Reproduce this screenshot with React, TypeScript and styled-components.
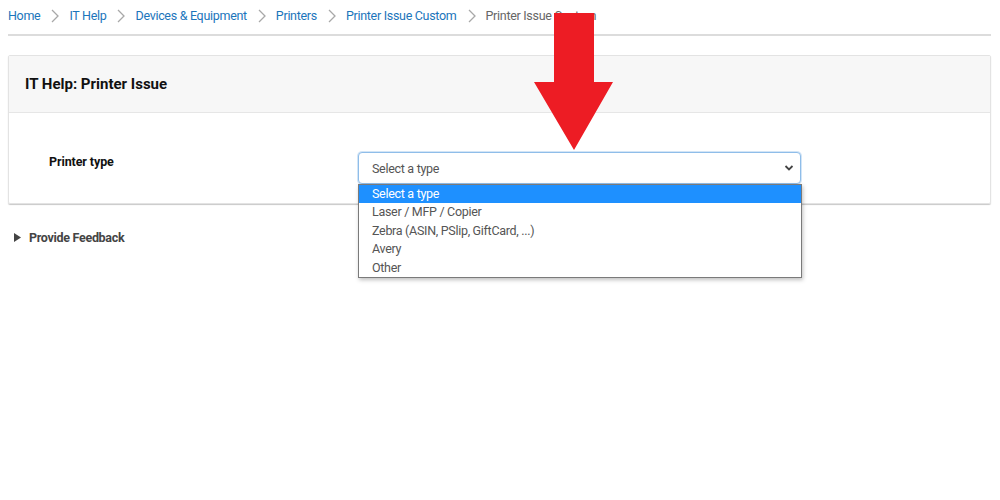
import React from 'react';
import styled, { createGlobalStyle } from 'styled-components';

const crumbs = [
  'Home',
  'IT Help',
  'Devices & Equipment',
  'Printers',
  'Printer Issue Custom',
];

const options = [
  'Select a type',
  'Laser / MFP / Copier',
  'Zebra (ASIN, PSlip, GiftCard, ...)',
  'Avery',
  'Other',
];

const GlobalStyle = createGlobalStyle`
  html, body {
    margin: 0;
    padding: 0;
    background: #ffffff;
  }
  body {
    font-family: Roboto, "Noto Sans", Arial, sans-serif;
    font-size: 12.5px;
    letter-spacing: -0.3px;
    color: #333;
  }
`;

const Page = styled.div`
  position: relative;
  width: 1000px;
  height: 500px;
  padding: 0 9px 0 8px;
  box-sizing: border-box;
  overflow: hidden;
`;

const Breadcrumb = styled.nav`
  display: flex;
  align-items: center;
  height: 36px;
  border-bottom: 2px solid #dcdcdc;
  box-sizing: border-box;
  padding-bottom: 3px;
`;

const Crumb = styled.a<{ $current?: boolean }>`
  color: ${({ $current }) => ($current ? '#666' : '#1b75bb')};
  text-decoration: none;
  font-size: 12.5px;
  white-space: nowrap;
`;

const Sep = styled.span`
  display: flex;
  align-items: center;
  margin: 0 10px 0 11px;
`;

const Card = styled.section`
  margin-top: 19px;
  border: 1px solid #e3e3e3;
  border-radius: 2px;
  box-shadow: 0 1px 1px rgba(0, 0, 0, 0.22);
`;

const CardHeader = styled.header`
  display: flex;
  align-items: center;
  height: 56px;
  padding: 0 16px;
  background: #f7f7f7;
  border-bottom: 1px solid #e6e6e6;
`;

const Title = styled.h2`
  margin: 0;
  font-size: 15px;
  font-weight: 700;
  letter-spacing: 0;
  color: #111;
`;

const CardBody = styled.div`
  display: grid;
  grid-template-columns: 309px 443px;
  padding: 39px 0 19px 40px;
`;

const Label = styled.label`
  font-size: 12.5px;
  font-weight: 700;
  letter-spacing: -0.1px;
  color: #111;
  padding-top: 2px;
`;

const SelectWrap = styled.div`
  position: relative;
`;

const SelectBox = styled.div`
  display: flex;
  align-items: center;
  justify-content: space-between;
  height: 32px;
  box-sizing: border-box;
  padding: 0 6px 0 13px;
  border: 1px solid #8fbde9;
  border-radius: 4px;
  box-shadow: 0 0 0 1px rgba(130, 180, 230, 0.35);
  color: #555;
  background: #fff;
`;

const Listbox = styled.ul`
  position: absolute;
  top: 32px;
  left: 0;
  width: 444px;
  margin: 0;
  padding: 0;
  list-style: none;
  background: #fff;
  border: 1px solid #7a7a7a;
  box-sizing: border-box;
  box-shadow: 1px 2px 4px rgba(0, 0, 0, 0.25);
  z-index: 2;
`;

const Option = styled.li<{ $active?: boolean }>`
  height: 18.4px;
  line-height: 18.4px;
  padding-left: 13px;
  color: ${({ $active }) => ($active ? '#fff' : '#555')};
  background: ${({ $active }) => ($active ? '#1e90ff' : 'transparent')};
`;

const Feedback = styled.div`
  display: flex;
  align-items: center;
  gap: 8px;
  margin-top: 26px;
  padding-left: 6px;
  font-weight: 700;
  color: #444;
`;

const Arrow = styled.svg`
  position: absolute;
  left: 534px;
  top: 13px;
  z-index: 3;
`;

const Chevron = () => (
  <svg width="8" height="14" viewBox="0 0 8 14">
    <polyline points="1,1 7,7 1,13" fill="none" stroke="#a8a8a8" strokeWidth="1.3" />
  </svg>
);

export default function App() {
  return (
    <>
      <GlobalStyle />
      <Page>
        <Breadcrumb>
          {crumbs.map((c) => (
            <React.Fragment key={c}>
              <Crumb href="#">{c}</Crumb>
              <Sep>
                <Chevron />
              </Sep>
            </React.Fragment>
          ))}
          <Crumb $current>Printer Issue Custom</Crumb>
        </Breadcrumb>

        <Card>
          <CardHeader>
            <Title>IT Help: Printer Issue</Title>
          </CardHeader>
          <CardBody>
            <Label>Printer type</Label>
            <SelectWrap>
              <SelectBox>
                <span>Select a type</span>
                <svg width="10" height="8" viewBox="0 0 10 8">
                  <polyline points="1.5,2 5,5.5 8.5,2" fill="none" stroke="#444" strokeWidth="1.8" />
                </svg>
              </SelectBox>
              <Listbox role="listbox">
                {options.map((o, i) => (
                  <Option key={o} $active={i === 0}>
                    {o}
                  </Option>
                ))}
              </Listbox>
            </SelectWrap>
          </CardBody>
        </Card>

        <Feedback>
          <svg width="7" height="9" viewBox="0 0 7 9">
            <polygon points="0,0 7,4.5 0,9" fill="#444" />
          </svg>
          Provide Feedback
        </Feedback>

        <Arrow width="80" height="138" viewBox="0 0 80 138">
          <polygon points="20,0 60,0 60,69 79,69 40,137 0,69 20,69" fill="#ed1c24" />
        </Arrow>
      </Page>
    </>
  );
}
